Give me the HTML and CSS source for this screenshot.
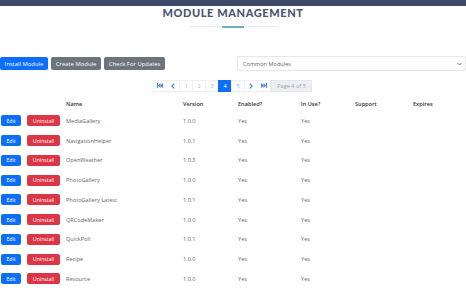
FILE: index.html
```html
<!DOCTYPE html>
<html lang="en">
<head>
  <meta charset="UTF-8">
  <title>Module Management</title>
  <link rel="stylesheet" href="styles.css">
</head>
<body>
  <div class="topbar"></div>

  <div class="heading">
    <h1>Module Management</h1>
    <div class="rule"><span></span></div>
  </div>

  <div class="toolbar">
    <button class="btn btn-primary">Install Module</button>
    <button class="btn btn-secondary">Create Module</button>
    <button class="btn btn-secondary">Check For Updates</button>
    <div class="select">
      <span>Common Modules</span>
      <svg width="5" height="4" viewBox="0 0 10 6"><path d="M1 1l4 4 4-4" fill="none" stroke="#555" stroke-width="1.6"/></svg>
    </div>
  </div>

  <div class="pager">
    <a class="page-item">
      <svg width="6" height="5" viewBox="0 0 12 10"><path d="M1 0v10" stroke="#3b82f0" stroke-width="2"/><path d="M7 0L2 5l5 5zM12 0L7 5l5 5z" fill="#3b82f0"/></svg>
    </a>
    <a class="page-item">
      <svg width="4" height="6" viewBox="0 0 6 10"><path d="M5 1L1 5l4 4" fill="none" stroke="#3b82f0" stroke-width="2"/></svg>
    </a>
    <a class="page-item">1</a>
    <a class="page-item">2</a>
    <a class="page-item">3</a>
    <a class="page-item active">4</a>
    <a class="page-item">5</a>
    <a class="page-item">
      <svg width="4" height="6" viewBox="0 0 6 10"><path d="M1 1l4 4-4 4" fill="none" stroke="#3b82f0" stroke-width="2"/></svg>
    </a>
    <a class="page-item">
      <svg width="6" height="5" viewBox="0 0 12 10"><path d="M11 0v10" stroke="#3b82f0" stroke-width="2"/><path d="M0 0l5 5-5 5zM5 0l5 5-5 5z" fill="#3b82f0"/></svg>
    </a>
    <span class="page-info">Page 4 of 5</span>
  </div>

  <table class="modules">
    <thead>
      <tr>
        <th class="actions"></th>
        <th class="c-name">Name</th>
        <th class="c-version">Version</th>
        <th class="c-enabled">Enabled?</th>
        <th class="c-inuse">In Use?</th>
        <th class="c-support">Support</th>
        <th class="c-expires">Expires</th>
      </tr>
    </thead>
    <tbody>
      <tr>
        <td class="actions"><button class="btn-sm btn-primary">Edit</button><button class="btn-sm btn-danger">Uninstall</button></td>
        <td>MediaGallery</td><td>1.0.0</td><td>Yes</td><td>Yes</td><td></td><td></td>
      </tr>
      <tr>
        <td class="actions"><button class="btn-sm btn-primary">Edit</button><button class="btn-sm btn-danger">Uninstall</button></td>
        <td>NavigationHelper</td><td>1.0.1</td><td>Yes</td><td>Yes</td><td></td><td></td>
      </tr>
      <tr>
        <td class="actions"><button class="btn-sm btn-primary">Edit</button><button class="btn-sm btn-danger">Uninstall</button></td>
        <td>OpenWeather</td><td>1.0.3</td><td>Yes</td><td>Yes</td><td></td><td></td>
      </tr>
      <tr>
        <td class="actions"><button class="btn-sm btn-primary">Edit</button><button class="btn-sm btn-danger">Uninstall</button></td>
        <td>PhotoGallery</td><td>1.0.0</td><td>Yes</td><td>Yes</td><td></td><td></td>
      </tr>
      <tr>
        <td class="actions"><button class="btn-sm btn-primary">Edit</button><button class="btn-sm btn-danger">Uninstall</button></td>
        <td>PhotoGallery Latest</td><td>1.0.1</td><td>Yes</td><td>Yes</td><td></td><td></td>
      </tr>
      <tr>
        <td class="actions"><button class="btn-sm btn-primary">Edit</button><button class="btn-sm btn-danger">Uninstall</button></td>
        <td>QRCodeMaker</td><td>1.0.0</td><td>Yes</td><td>Yes</td><td></td><td></td>
      </tr>
      <tr>
        <td class="actions"><button class="btn-sm btn-primary">Edit</button><button class="btn-sm btn-danger">Uninstall</button></td>
        <td>QuickPoll</td><td>1.0.1</td><td>Yes</td><td>Yes</td><td></td><td></td>
      </tr>
      <tr>
        <td class="actions"><button class="btn-sm btn-primary">Edit</button><button class="btn-sm btn-danger">Uninstall</button></td>
        <td>Recipe</td><td>1.0.0</td><td>Yes</td><td>Yes</td><td></td><td></td>
      </tr>
      <tr>
        <td class="actions"><button class="btn-sm btn-primary">Edit</button><button class="btn-sm btn-danger">Uninstall</button></td>
        <td>Resource</td><td>1.0.0</td><td>Yes</td><td>Yes</td><td></td><td></td>
      </tr>
    </tbody>
  </table>
</body>
</html>
```

FILE: styles.css
```css
body {
  margin: 0;
  font-family: "Open Sans", sans-serif;
  font-size: 5.6px;
  color: #555;
  background: #fff;
  overflow: hidden;
}
.topbar {
  height: 6px;
  background: #3d4a67;
}
.heading {
  text-align: center;
}
.heading h1 {
  margin: 0;
  font-family: Lato, sans-serif;
  font-weight: 900;
  font-size: 11px;
  line-height: 14px;
  letter-spacing: 0.6px;
  text-transform: uppercase;
  color: #4a5672;
}
.rule {
  width: 88px;
  height: 1px;
  margin: 6px auto 0;
  background: #e6eaee;
  display: flex;
  justify-content: center;
}
.rule span {
  width: 22px;
  height: 2px;
  background: #6fb0c2;
}
.toolbar {
  display: flex;
  align-items: center;
  margin-top: 29px;
  height: 15px;
}
.btn {
  font-family: "Open Sans", sans-serif;
  font-size: 5.9px;
  color: #fff;
  border: 0;
  border-radius: 2px;
  height: 13px;
  padding: 0 4.5px;
  margin-right: 3.5px;
  white-space: nowrap;
}
.btn-primary {
  background: #0d6efd;
}
.btn-secondary {
  background: #6c757d;
}
.btn-danger {
  background: #dc3545;
}
.select {
  margin-left: auto;
  width: 219px;
  height: 13px;
  border: 1px solid #e4e7eb;
  border-radius: 2px;
  display: flex;
  align-items: center;
  justify-content: space-between;
  padding: 0 3px 0 5px;
  color: #666;
}
.pager {
  display: flex;
  justify-content: center;
  align-items: center;
  margin-top: 8px;
  height: 13px;
}
.page-item {
  width: 14px;
  height: 12px;
  border: 1px solid #eef0f3;
  margin-left: -1px;
  box-sizing: border-box;
  display: flex;
  align-items: center;
  justify-content: center;
  color: #9dbbe6;
}
.page-item.active {
  background: #0d6efd;
  border-color: #0d6efd;
  color: #fff;
}
.page-info {
  height: 12px;
  line-height: 10px;
  padding: 0 5px;
  background: #eceef1;
  color: #a0a4a8;
  border: 1px solid #e3e6ea;
  box-sizing: border-box;
}
.modules {
  margin-top: 5px;
  width: 466px;
  border-collapse: collapse;
  table-layout: fixed;
}
.modules th {
  text-align: left;
  font-weight: 600;
  color: #333;
  height: 14px;
  padding: 0 0 0 4px;
}
.modules td {
  height: 19.75px;
  padding: 0 0 0 4px;
  color: #666;
  white-space: nowrap;
}
.modules .actions {
  width: 61px;
  padding-left: 1px;
}
.c-name { width: 113px; }
.c-version { width: 51px; }
.c-enabled { width: 59px; }
.c-inuse { width: 50px; }
.c-support { width: 54px; }
.btn-sm {
  font-family: "Open Sans", sans-serif;
  font-size: 5.2px;
  color: #fff;
  border: 0;
  border-radius: 2px;
  height: 11px;
  padding: 0;
  vertical-align: middle;
}
.btn-sm.btn-primary {
  width: 20px;
  margin-right: 6px;
}
.btn-sm.btn-danger {
  width: 33px;
}
```
